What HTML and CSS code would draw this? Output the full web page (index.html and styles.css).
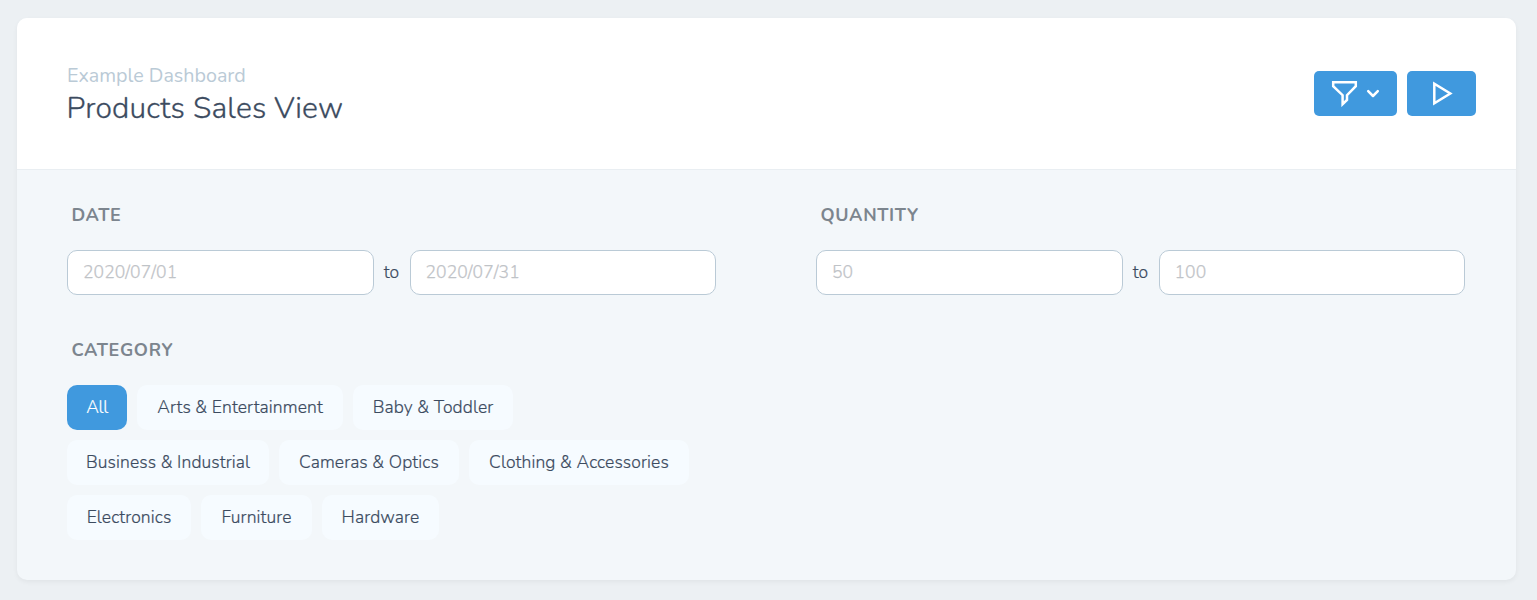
FILE: index.html
```html
<!DOCTYPE html>
<html lang="en">
<head>
<meta charset="utf-8">
<title>Products Sales View</title>
<link rel="stylesheet" href="styles.css">
</head>
<body>
<main class="card">
  <header class="header">
    <div>
      <div class="subtitle">Example Dashboard</div>
      <h1 class="title">Products Sales View</h1>
    </div>
    <div class="actions">
      <button class="btn btn-filter" aria-label="Filters">
        <svg class="funnel" width="27" height="27" viewBox="0 0 27 27"><path d="M2.2 2.2H24.8V6.2L16 15.2V20L11.6 24.2V15.2L2.2 6.2Z"/></svg>
        <svg class="chevron" width="14" height="10" viewBox="0 0 14 10"><path d="M2.2 2.2L7 7L11.8 2.2"/></svg>
      </button>
      <button class="btn btn-run" aria-label="Run">
        <svg class="play" width="22" height="26" viewBox="0 0 22 26"><path d="M3.3 2.7V22.3L19.3 12.5Z"/></svg>
      </button>
    </div>
  </header>
  <section class="filters">
    <div class="filter">
      <h2 class="label">Date</h2>
      <div class="range">
        <input class="field" placeholder="2020/07/01"><span class="to">to</span><input class="field" placeholder="2020/07/31">
      </div>
    </div>
    <div class="filter">
      <h2 class="label">Quantity</h2>
      <div class="range">
        <input class="field" placeholder="50"><span class="to">to</span><input class="field" placeholder="100">
      </div>
    </div>
    <div class="filter">
      <h2 class="label">Category</h2>
      <div class="pills">
        <span class="pill active all">All</span>
        <span class="pill arts">Arts &amp; Entertainment</span>
        <span class="pill baby">Baby &amp; Toddler</span>
        <span class="pill business">Business &amp; Industrial</span>
        <span class="pill cameras">Cameras &amp; Optics</span>
        <span class="pill clothing">Clothing &amp; Accessories</span>
        <span class="pill electronics">Electronics</span>
        <span class="pill furniture">Furniture</span>
        <span class="pill hardware">Hardware</span>
      </div>
    </div>
  </section>
</main>
</body>
</html>
```
FILE: styles.css
```css
* { box-sizing: border-box; }
body {
  margin: 0;
  padding: 18px 21px 20px 17px;
  height: 600px;
  background: #ecf0f3;
  color: #3c4b5f;
  font-family: Nunito, "Open Sans", sans-serif;
  font-size: 17.5px;
  font-weight: 300;
}
.card {
  height: 562px;
  background: #f3f7fa;
  border-radius: 10px;
  box-shadow: 0 2px 5px rgba(0, 0, 0, .05);
  overflow: hidden;
}
.header {
  height: 152px;
  padding: 3px 40px 0 50px;
  display: flex;
  align-items: center;
  justify-content: space-between;
  background: #fff;
  border-bottom: 1px solid #e9eef2;
}
.subtitle { font-size: 19.7px; font-weight: 400; line-height: 26px; color: #bacad6; }
.title {
  margin: 0 0 0 -.5px;
  font-size: 30px;
  font-weight: 300;
  line-height: 39px;
  letter-spacing: .22px;
  -webkit-text-stroke: .3px;
}
.actions { display: flex; gap: 10px; margin-top: -3px; }
.btn {
  height: 45px;
  padding: 0;
  border: 0;
  border-radius: 5px;
  background: #4099de;
  display: flex;
  align-items: center;
  justify-content: center;
}
.btn-filter { width: 83px; gap: 8px; }
.btn-run { width: 69px; }
.btn svg { fill: none; stroke: #fff; stroke-width: 2.5; }
.btn .chevron { stroke-linecap: round; stroke-linejoin: round; }
.filters {
  display: grid;
  grid-template-columns: 649px 649px;
  column-gap: 100px;
  padding: 33px 50px 0;
}
.filter { height: 135px; }
.label {
  margin: 0 0 23px;
  padding-left: 4.5px;
  font-size: 18px;
  font-weight: 700;
  line-height: 24px;
  letter-spacing: .65px;
  text-transform: uppercase;
  color: #7c858e;
}
.range { display: flex; align-items: center; }
.field {
  flex: 1;
  min-width: 0;
  height: 45px;
  padding: 0 15px 2px;
  border: 1px solid #bacad6;
  border-radius: 10px;
  background: #fff;
  font: inherit;
  letter-spacing: .08px;
}
.field::placeholder { color: #bfc3c7; -webkit-text-stroke: .25px; }
.to { width: 36px; padding-bottom: 2px; text-align: center; -webkit-text-stroke: .2px; }
.pills { display: flex; flex-wrap: wrap; gap: 10px; }
.pill {
  height: 45px;
  line-height: 44px;
  border-radius: 10px;
  background: #f6fbff;
  text-align: center;
  white-space: nowrap;
  letter-spacing: .1px;
  -webkit-text-stroke: .2px;
}
.active { background: #4099de; color: #fff; letter-spacing: -.3px; }
.all { width: 60px; }
.arts { width: 206px; }
.baby { width: 160px; }
.business { width: 202px; }
.cameras { width: 180px; }
.clothing { width: 220px; }
.electronics { width: 124px; }
.furniture { width: 111px; }
.hardware { width: 117px; }
```
